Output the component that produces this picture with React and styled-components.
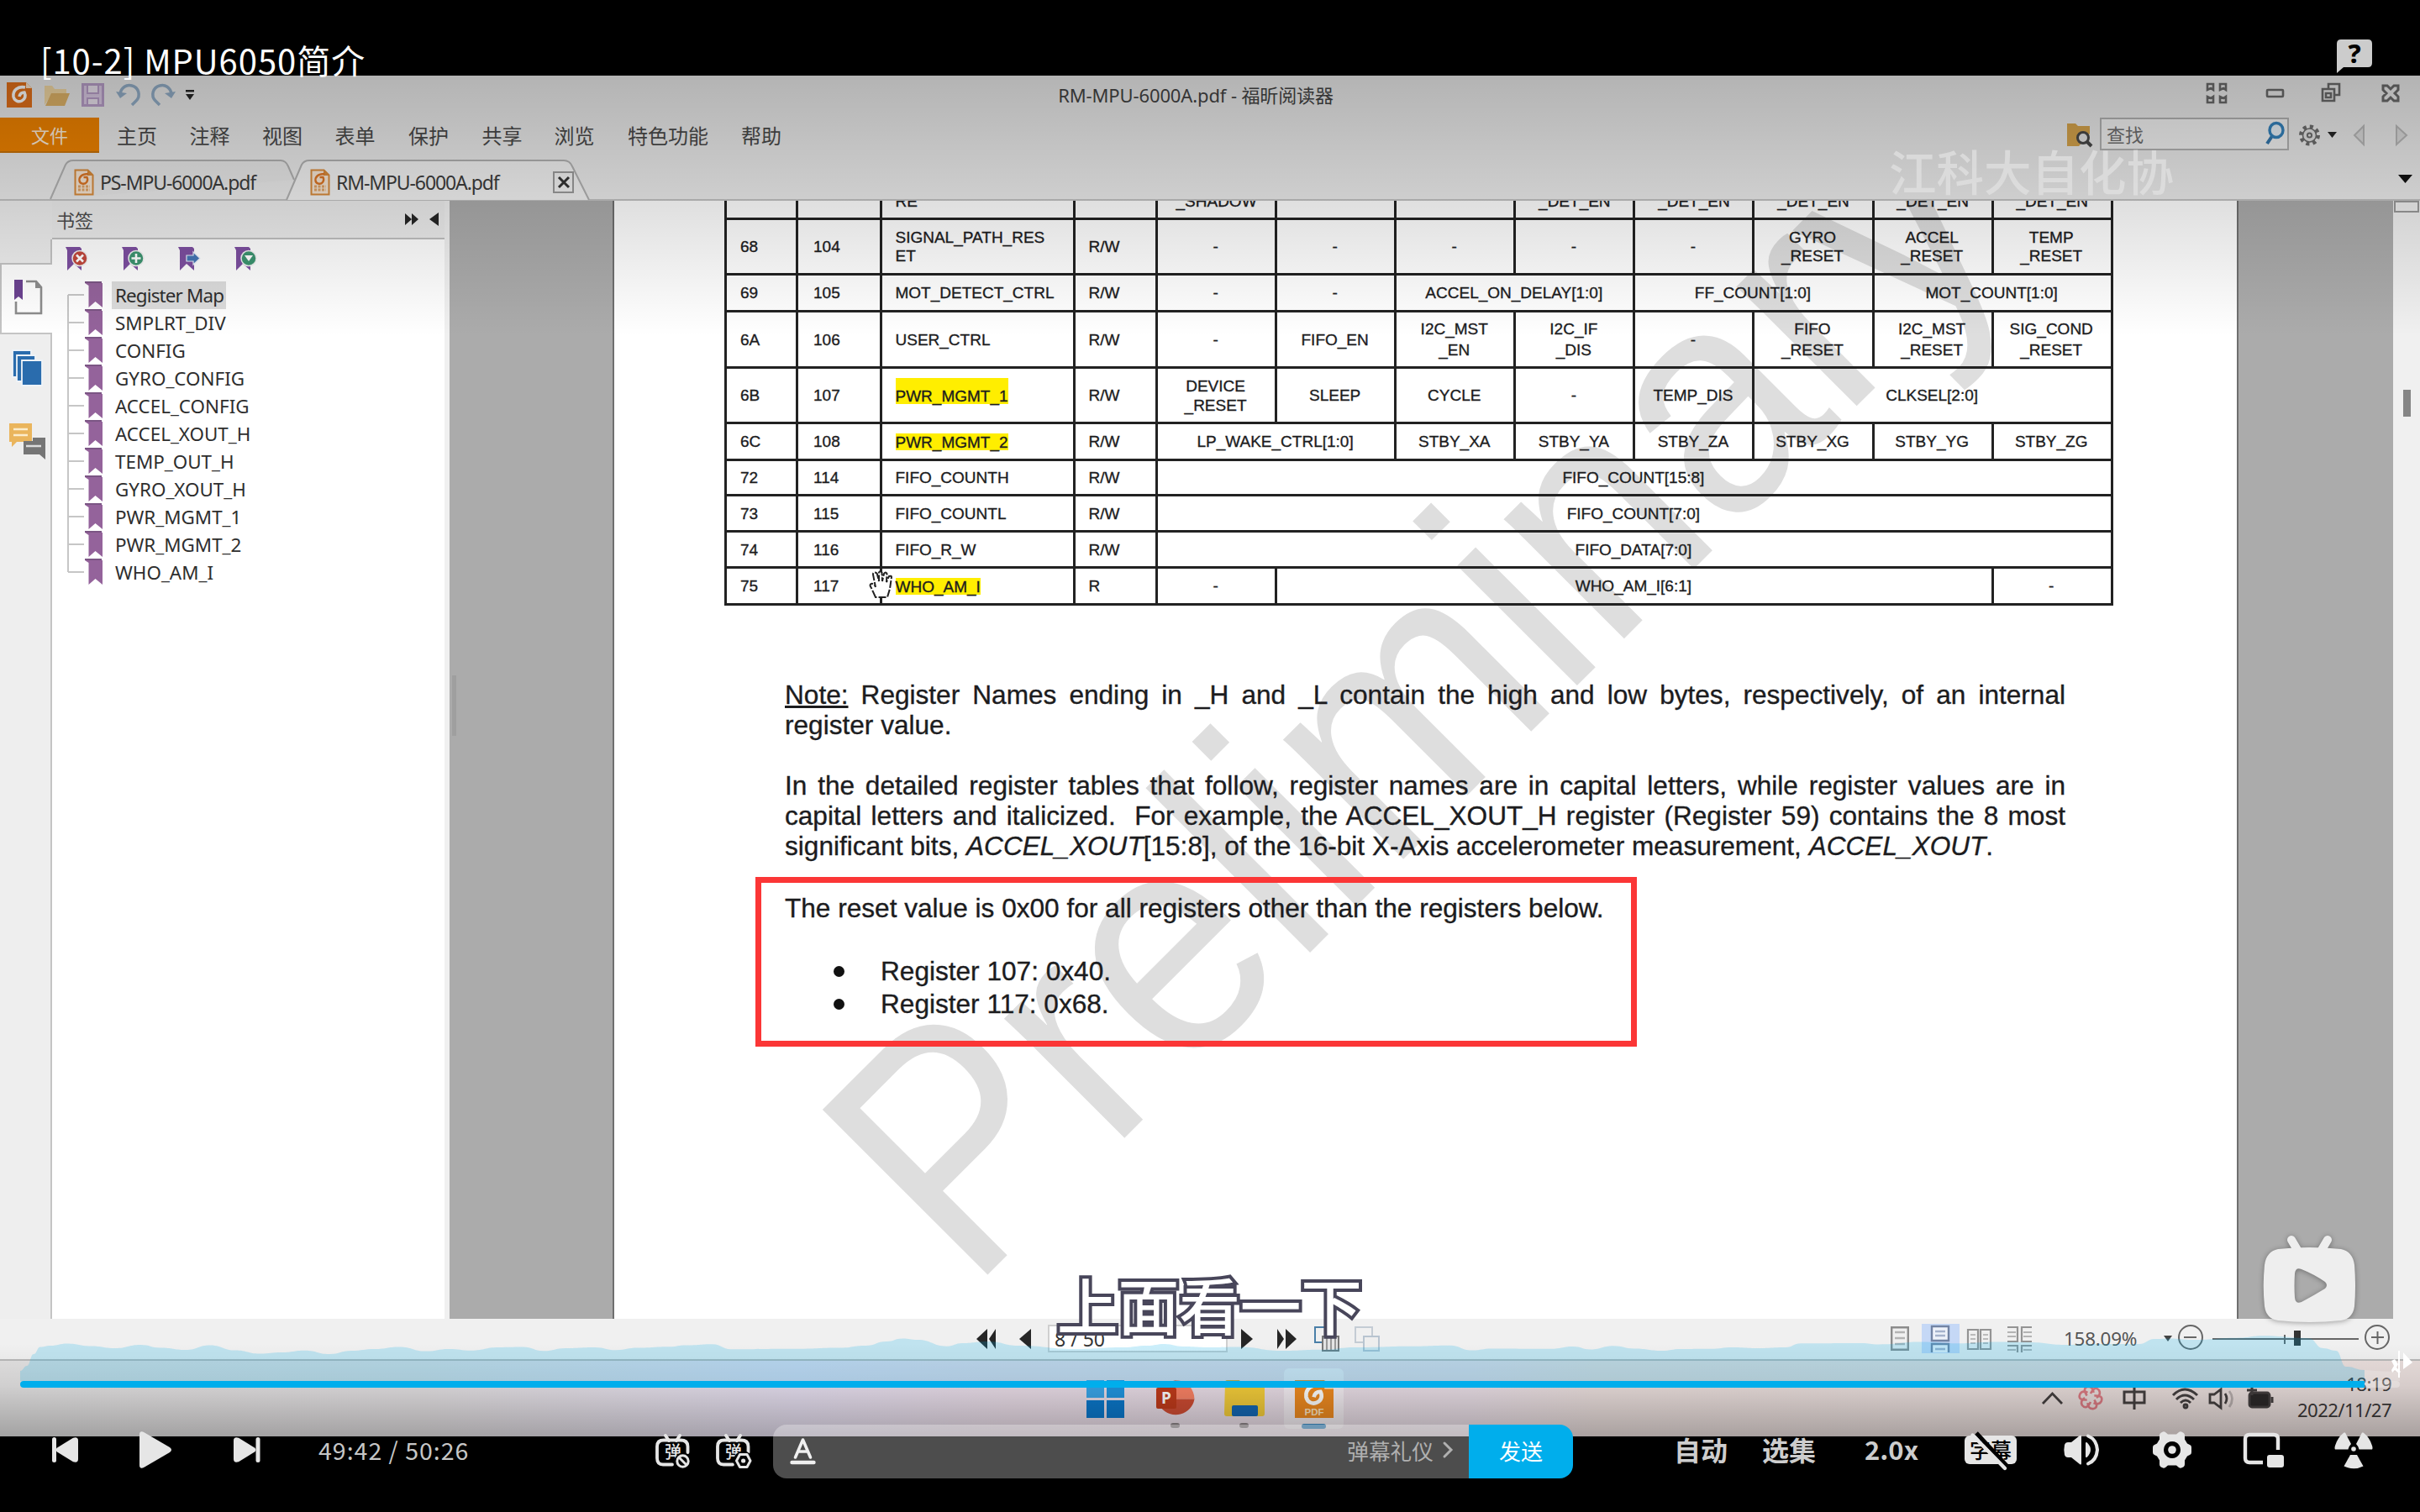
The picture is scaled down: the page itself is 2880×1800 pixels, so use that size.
import React from "react";
import styled, { createGlobalStyle, css } from "styled-components";

const CJK = `"Noto Sans CJK SC", sans-serif`;
const UI = `"Noto Sans", "Noto Sans CJK SC", sans-serif`;
const DOC = `"Liberation Sans", Arial, sans-serif`;

const GlobalStyle = createGlobalStyle`
  * { box-sizing: border-box; }
  body { margin: 0; background: #000; }
  svg { display: block; flex: none; overflow: visible; }
`;

/* ---------- player shell ---------- */
const Player = styled.main`
  position: relative;
  width: 2880px;
  height: 1800px;
  overflow: hidden;
  background: #000;
  padding: 90px 0;
  font-family: ${CJK};
`;

const Video = styled.section`
  width: 2880px;
  height: 1620px;
  display: flex;
  flex-direction: column;
  background: #ececec;
  overflow: hidden;
`;

const TopShade = styled.div`
  position: absolute;
  left: 0;
  top: 90px;
  width: 100%;
  height: 310px;
  background: linear-gradient(rgba(0, 0, 0, 0.24), rgba(0, 0, 0, 0.12) 50%, rgba(0, 0, 0, 0));
  pointer-events: none;
`;

const BottomShade = styled.div`
  position: absolute;
  left: 0;
  top: 1600px;
  width: 100%;
  height: 110px;
  background: linear-gradient(rgba(0, 0, 0, 0), rgba(0, 0, 0, 0.08) 45%, rgba(0, 0, 0, 0.28));
`;

const PlayerHeader = styled.header`
  position: absolute;
  left: 48px;
  right: 57px;
  top: 42px;
  display: flex;
  justify-content: space-between;
  align-items: flex-start;
`;

const VideoTitle = styled.h1`
  margin: 0;
  font: 400 40px/58px ${CJK};
  letter-spacing: 0.95px;
  color: #fff;
`;

const HelpBadge = styled.div`
  margin-top: 3px;
`;

/* ---------- pdf reader chrome ---------- */
const Row = styled.div`
  display: flex;
  align-items: center;
  flex: none;
  height: ${(p) => p.$h}px;
  padding-left: ${(p) => p.$pl || 0}px;
  gap: ${(p) => p.$gap || 0}px;
`;

const Spacer = styled.div`
  flex: ${(p) => (p.$w ? "none" : 1)};
  width: ${(p) => p.$w || 0}px;
`;

const WindowTitle = styled.div`
  width: 340px;
  font: 400 22px/30px ${UI};
  letter-spacing: -0.12px;
  color: #444;
  text-align: center;
  white-space: nowrap;
`;

const FileButton = styled.div`
  width: 118px;
  height: 42px;
  background: #f08300;
  border-bottom: 2px solid #c97208;
  color: #ffeeda;
  font: 400 22px/40px ${CJK};
  text-align: center;
`;

const MenuItem = styled.div`
  font: 400 24px/42px ${CJK};
  color: #4a4a4a;
  white-space: nowrap;
`;

const SearchField = styled.div`
  width: 225px;
  height: 39px;
  margin-bottom: 3px;
  border: 2px solid #b4b4b4;
  background: #f4f4f4;
  display: flex;
  align-items: center;
  justify-content: space-between;
  padding: 0 3px 0 6px;
  font: 400 22px/35px ${CJK};
  color: #707070;
`;

const TabStrip = styled.div`
  flex: none;
  height: 54px;
  padding: 6px 0 0 60px;
  display: flex;
  align-items: flex-end;
  border-bottom: 2px solid #c2c2c2;
`;

const Tab = styled.div`
  position: relative;
  flex: none;
  width: ${(p) => p.$w}px;
  margin-left: ${(p) => p.$ml || 0}px;
  height: 47px;
  display: flex;
  align-items: center;
  gap: 7px;
  padding: 6px 19px 0 28px;
  font: 400 23px/32px ${UI};
  letter-spacing: ${(p) => p.$ls || 0}px;
  color: #3c3c3c;
`;

const TabShape = styled.svg`
  position: absolute;
  left: 0;
  top: 0;
`;

const TabText = styled.span`
  position: relative;
  flex: 1;
  white-space: nowrap;
`;

const CloseBox = styled.span`
  position: relative;
  flex: none;
  width: 25px;
  height: 26px;
  border: 2px solid #9c9c9c;
  display: grid;
  place-items: center;
`;

/* ---------- workspace ---------- */
const Workspace = styled.div`
  flex: none;
  height: 1331px;
  display: flex;
  background: #ababab;
`;

const Rail = styled.nav`
  width: 62px;
  display: flex;
  flex-direction: column;
  background: #eeeeee;
`;

const RailCell = styled.div`
  flex: ${(p) => (p.$h ? "none" : 1)};
  height: ${(p) => (p.$h ? p.$h + "px" : "auto")};
  padding: ${(p) => p.$pad || 0};
  border-right: ${(p) => (p.$open ? "none" : "2px solid #c4c4c4")};
  ${(p) =>
    p.$active &&
    css`
      background: #fff;
      border: 2px solid #c4c4c4;
      border-right: none;
    `}
`;

const Panel = styled.aside`
  width: 473px;
  background: #fff;
  border-right: 6px solid #f0f0f0;
  display: flex;
  flex-direction: column;
`;

const PanelHeader = styled.div`
  height: 46px;
  padding: 0 7px 0 5px;
  display: flex;
  align-items: center;
  background: #ececec;
  border-bottom: 2px solid #c0c0c0;
  font: 400 22px/40px ${CJK};
  color: #4c4c4c;
`;

const PanelTools = styled.div`
  display: flex;
  gap: 41px;
  padding: 8px 0 0 16px;
  height: 50px;
`;

const Tree = styled.ul`
  list-style: none;
  margin: 0;
  padding: 0 0 0 18px;
`;

const TreeRow = styled.li`
  height: 33.05px;
  display: flex;
  align-items: center;
`;

const TreeLabel = styled.span`
  margin-left: 11px;
  padding: 0 3px 0 4px;
  height: 33px;
  background: ${(p) => (p.$selected ? "#dcdcdc" : "transparent")};
  font: 400 22.4px/33px ${UI};
  letter-spacing: ${(p) => p.$ls || 0}px;
  color: #2e2e2e;
  white-space: nowrap;
`;

const Gutter = styled.div`
  width: ${(p) => p.$w}px;
  padding: 565px 0 0 3px;
`;

const Grip = styled.div`
  width: 5px;
  height: 72px;
  background: #9f9f9f;
`;

const Scrollbar = styled.div`
  width: 32px;
  background: #f0f0f0;
  display: flex;
  flex-direction: column;
  align-items: center;
`;

const ScrollUp = styled.div`
  width: 30px;
  height: 14px;
  border: 2px solid #9a9a9a;
  background: #f0f0f0;
`;

const ScrollThumb = styled.div`
  margin-top: 211px;
  width: 9px;
  height: 32px;
  background: #858585;
`;

const Page = styled.article`
  position: relative;
  width: 1935px;
  background: #fff;
  border-left: 2px solid #6f6f6f;
  border-right: 2px solid #6f6f6f;
  overflow: hidden;
  font-family: ${DOC};
  color: #1c1c1e;
`;

const Stamp = styled.div`
  position: absolute;
  left: 424px;
  top: 1000.5px;
  font: 400 352px/352px ${DOC};
  color: #dedede;
  transform-origin: 0 298px;
  transform: rotate(-45deg) scaleY(1.085);
  white-space: nowrap;
`;

const StampCap = styled.span`
  display: inline-block;
  transform-origin: 0 298px;
  transform: scaleY(1.058);
`;

const RegisterTable = styled.div`
  position: relative;
  width: 1653px;
  margin-left: 131px;
  border-right: 3px solid #222;
  font-size: 19px;
  -webkit-text-stroke: 0.35px #1c1c1e;
`;

const RegisterRow = styled.div`
  display: grid;
  grid-template-columns: 85px 99.5px 230px 98.5px repeat(8, 142.1px);
  height: ${(p) => p.$h}px;
  line-height: ${(p) => p.$lh || 22.5}px;
  border-bottom: 3px solid #222;
`;

const Cell = styled.div`
  grid-column: span ${(p) => p.$span || 1};
  display: flex;
  align-items: ${(p) => (p.$cut ? "flex-end" : "center")};
  justify-content: ${(p) => (p.$left ? "flex-start" : "center")};
  text-align: ${(p) => (p.$left ? "left" : "center")};
  padding: ${(p) => (p.$cut ? "0 0 7px" : "2px 2px 0 0")};
  padding-left: ${(p) => p.$left || 0}px;
  min-width: 0;
  min-height: 0;
  border-left: 3px solid #222;
  white-space: pre;
`;

const Mark = styled.span`
  background: #ffee00;
  line-height: 19px;
  padding-top: ${(p) => p.$top || 0}px;
  margin-top: ${(p) => -(p.$top || 0)}px;
`;

const Prose = styled.section`
  position: relative;
  margin: ${(p) => p.$mt}px 0 0 203px;
  width: 1524px;
  font-size: 31.6px;
  line-height: 36.2px;
  -webkit-text-stroke: 0.35px #1c1c1e;
`;

const Line = styled.div`
  white-space: ${(p) => (p.$justify ? "normal" : "pre")};
  text-align-last: ${(p) => (p.$justify ? "justify" : "left")};
  height: 36.2px;
`;

const Callout = styled.section`
  position: relative;
  width: 1049px;
  height: 202px;
  margin: 18.7px 0 0 168px;
  border: 7px solid #fb3636;
  padding: 11.7px 0 0 28px;
  font-size: 31.6px;
  line-height: 36.2px;
  -webkit-text-stroke: 0.35px #1c1c1e;
`;

const Bullets = styled.ul`
  list-style: none;
  margin: 37.5px 0 0;
  padding: 0 0 0 58px;
`;

const Bullet = styled.li`
  display: flex;
  align-items: center;
  height: 39px;
  line-height: 39px;
  &::before {
    content: "";
    width: 13px;
    height: 13px;
    margin-right: 43px;
    border-radius: 50%;
    background: #111;
  }
`;

const HandCursor = styled.svg`
  position: absolute;
  left: 304px;
  top: 440px;
`;

/* ---------- status bar + taskbar ---------- */
const StatusBar = styled.div`
  flex: none;
  height: 50px;
  padding-bottom: 1px;
  display: flex;
  align-items: center;
  background: #f0f0f0;
  border-bottom: 2px solid #b9b9b9;
`;

const PageBox = styled.div`
  width: 214px;
  height: 33px;
  background: #fff;
  border: 2px solid #cfcfcf;
  padding-left: 6px;
  font: 400 23px/31px ${UI};
  color: #333;
`;

const ZoomText = styled.div`
  width: 92px;
  font: 400 22.4px/30px ${UI};
  letter-spacing: -0.2px;
  color: #555;
`;

const ActiveView = styled.div`
  width: 45px;
  height: 35px;
  display: grid;
  place-items: center;
  background: #c5d8f6;
`;

const Taskbar = styled.div`
  flex: none;
  height: 90px;
  display: flex;
  align-items: flex-start;
  background: linear-gradient(90deg, #e2e1e1 0, #e3e0e2 500px, #e6dff0 950px, #eadde8 1200px, #e9dee6 1750px, #ebdfdd 1900px, #e9dedc 100%);
`;

const TaskIcon = styled.div`
  flex: none;
  width: 71px;
  height: 72px;
  margin-left: ${(p) => p.$ml || 0}px;
  margin-top: 9px;
  border-radius: 6px;
  background: ${(p) => (p.$active ? "rgba(255,255,255,.45)" : "transparent")};
  display: flex;
  flex-direction: column;
  align-items: center;
  padding-top: 14px;
`;

const Dot = styled.i`
  flex: none;
  width: ${(p) => p.$w}px;
  height: 6px;
  margin-top: ${(p) => p.$mt || 6}px;
  border-radius: 3px;
  background: ${(p) => p.$c};
`;

const Tray = styled.div`
  display: flex;
  align-items: center;
  height: 86px;
`;

const Clock = styled.div`
  width: 140px;
  text-align: right;
  font: 400 22.2px/31px ${UI};
  letter-spacing: -0.6px;
  color: #3b3838;
`;

/* ---------- things lying over the video ---------- */
const Uploader = styled.div`
  position: absolute;
  left: 2248px;
  top: 172px;
  font: 500 56.5px/60px ${CJK};
  color: rgba(226, 226, 226, 0.72);
  white-space: nowrap;
`;

const Subtitle = styled.div`
  position: absolute;
  left: 1258px;
  top: 1504px;
  font: 500 72.6px/96px ${CJK};
  color: #fff;
  -webkit-text-stroke: 8px #48465a;
  paint-order: stroke fill;
  white-space: nowrap;
`;

const LogoBadge = styled.div`
  position: absolute;
  left: 2693px;
  top: 1470px;
  filter: drop-shadow(0 1px 3px rgba(0, 0, 0, 0.35));
`;

const Heatmap = styled.svg`
  position: absolute;
  left: 0;
  top: 1580px;
`;

const ProgressTrack = styled.div`
  position: absolute;
  left: 24px;
  top: 1644px;
  width: 2832px;
  height: 8px;
  border-radius: 4px;
  overflow: hidden;
  background: rgba(255, 255, 255, 0.3);
`;

const ProgressFill = styled.div`
  width: 2790px;
  height: 8px;
  background: #00aeec;
`;

const ThumbIcon = styled.svg`
  position: absolute;
  left: 2846px;
  top: 1607px;
`;

const Controls = styled.footer`
  position: absolute;
  left: 0;
  top: 1696px;
  width: 2880px;
  height: 64px;
  display: flex;
  align-items: center;
  color: #e6e6e6;
`;

const Slot = styled.div`
  flex: none;
  width: ${(p) => p.$w}px;
  margin-left: ${(p) => p.$ml || 0}px;
  margin-top: ${(p) => p.$dy || 0}px;
`;

const Time = styled.div`
  flex: none;
  width: 200px;
  margin-left: 69px;
  margin-top: -4px;
  font: 400 28.5px/40px ${CJK};
  letter-spacing: 1px;
  color: #c6c6c6;
  white-space: nowrap;
`;

const DanmakuBar = styled.div`
  flex: none;
  margin-left: 26px;
  width: 828px;
  height: 64px;
  border-radius: 16px 0 0 16px;
  background: rgba(255, 255, 255, 0.3);
  display: flex;
  align-items: center;
  padding-left: 20px;
`;

const Etiquette = styled.span`
  margin-left: auto;
  margin-right: 11px;
  margin-top: -2px;
  font: 400 25.7px/40px ${CJK};
  color: #b0b0b0;
`;

const SendButton = styled.div`
  flex: none;
  width: 124px;
  height: 64px;
  border-radius: 0 16px 16px 0;
  background: #00aeec;
  color: #fff;
  font: 400 26px/62px ${CJK};
  text-align: center;
`;

const TextControl = styled.div`
  flex: none;
  width: ${(p) => p.$w}px;
  margin-left: ${(p) => p.$ml}px;
  margin-top: -6px;
  font: 700 ${(p) => p.$fs || 32}px/44px ${CJK};
  color: #cdcdcd;
  white-space: nowrap;
`;

/* ---------- icons ---------- */
const FoxitIcon = ({ w = 30, h = 30, bg = "#e2701a", pdf }) => (
  <svg width={w} height={h} viewBox="0 0 30 30" preserveAspectRatio="none">
    <path d="M0 0h23l7 7v23H0z" fill={bg} />
    <path d="M23 0l7 7h-7z" fill="#fbe3c8" />
    <path d="M22 6C13 4 7 10 8 17c1 5 6 7 10 5 4-2 5-6 3-10q-5 0-6 5" fill="none" stroke="#fff" strokeWidth="3.6" transform={pdf ? "translate(2 -1) scale(.85)" : ""} />
    {pdf && <text x="15" y="28" fontSize="7.5" fontWeight="700" textAnchor="middle" fill="#fde6c4" fontFamily="Liberation Sans">PDF</text>}
  </svg>
);

const DocGlyph = styled.svg`
  position: relative;
`;

const DocIcon = () => (
  <DocGlyph width="24" height="32" viewBox="0 0 24 32">
    <path d="M1.5 1.5h15l6 6v23h-21z" fill="#f7e6d4" stroke="#d88a3a" strokeWidth="2" />
    <path d="M16 1.5v6.500h6.500z" fill="#d88a3a" />
    <path d="M17 6C9 6 6 10 6.500 14c.5 4 6 5 8.500 2 1.500-2 1.500-4 .5-6h-4" fill="none" stroke="#dc7524" strokeWidth="2.4" />
    <path d="M5 21h14M5 25h14" stroke="#e0a468" strokeWidth="3" strokeDasharray="3 1.500" />
  </DocGlyph>
);

const Ribbon = ({ kind }) => (
  <svg width="26" height="30" viewBox="0 0 26 30">
    <path d="M0 1h17l2 2v26l-9-8-8 8V5z" fill="#7d4fa0" />
    {kind === "next" ? (
      <path d="M10 11h8V7l8 7.500-8 7.500v-4h-8z" fill="#4575b4" stroke="#e8eef8" strokeWidth="1.200" />
    ) : (
      <circle cx="17" cy="14.500" r="9" fill={kind === "delete" ? "#c2483c" : "#3c9470"} stroke="#f1f1f1" strokeWidth="1.500" />
    )}
    {kind === "delete" && <path d="M13 10.500l8 8m0-8l-8 8" stroke="#fff" strokeWidth="2.600" />}
    {kind === "add" && <path d="M17 9v11m-5.500-5.500h11" stroke="#fff" strokeWidth="2.600" />}
    {kind === "expand" && <path d="M12 11h10l-5 7z" fill="#fff" />}
  </svg>
);

const TreeNode = ({ first, last }) => (
  <svg width="42" height="33" viewBox="0 0 42 33">
    <path d={`M1 ${first ? 16 : 0}V${last ? 16 : 33}M1 16h19`} stroke="#c6c6c6" strokeWidth="2" fill="none" />
    <path d="M21 2h21v29l-8.500-7-8 7V5z" fill="#94639b" />
    <path d="M21 1h20" stroke="#7b5584" strokeWidth="2" />
  </svg>
);

const Arrow = ({ d, w, h = 24, c = "#262626" }) => (
  <svg width={w} height={h} viewBox={`0 0 ${w} ${h}`}>
    <path d={d} fill={c} />
  </svg>
);

const DanmakuIcon = ({ children }) => (
  <svg width="42" height="42" viewBox="0 0 42 42">
    <path d="M12 2l4 6M29 2l-4 6" stroke="#e6e6e6" strokeWidth="4" strokeLinecap="round" />
    <path d="M20 36.500H9Q2 36.500 2 29V15Q2 7.500 10 7.500H30Q38.500 7.500 38.500 15V22" fill="none" stroke="#e6e6e6" strokeWidth="3.800" strokeLinecap="round" />
    <text x="11" y="29" fontFamily="Noto Sans CJK SC" fontWeight="500" fontSize="20" fill="#e6e6e6">弹</text>
    {children}
  </svg>
);

/* ---------- data ---------- */
const MENU = [
  ["主页", 21], ["注释", 38.5], ["视图", 38.5], ["表单", 38.5], ["保护", 39.5],
  ["共享", 39.5], ["浏览", 38], ["特色功能", 39.5], ["帮助", 39],
];

const BOOKMARKS = [
  "Register Map", "SMPLRT_DIV", "CONFIG", "GYRO_CONFIG", "ACCEL_CONFIG", "ACCEL_XOUT_H",
  "TEMP_OUT_H", "GYRO_XOUT_H", "PWR_MGMT_1", "PWR_MGMT_2", "WHO_AM_I",
];

const REGISTERS = [
  { h: 66, head: ["68", "104", "SIGNAL_PATH_RES\nET", "R/W"], bits: ["-", "-", "-", "-", "-", "GYRO\n_RESET", "ACCEL\n_RESET", "TEMP\n_RESET"] },
  { h: 44, head: ["69", "105", "MOT_DETECT_CTRL", "R/W"], bits: ["-", "-", ["ACCEL_ON_DELAY[1:0]", 2], ["FF_COUNT[1:0]", 2], ["MOT_COUNT[1:0]", 2]] },
  { h: 67.5, lh: 24.3, head: ["6A", "106", "USER_CTRL", "R/W"], bits: ["-", "FIFO_EN", "I2C_MST\n_EN", "I2C_IF\n_DIS", "-", "FIFO\n_RESET", "I2C_MST\n_RESET", "SIG_COND\n_RESET"] },
  { h: 66, mark: 12, head: ["6B", "107", "PWR_MGMT_1", "R/W"], bits: ["DEVICE\n_RESET", "SLEEP", "CYCLE", "-", "TEMP_DIS", ["CLKSEL[2:0]", 3]] },
  { h: 43.5, mark: 1, head: ["6C", "108", "PWR_MGMT_2", "R/W"], bits: [["LP_WAKE_CTRL[1:0]", 2], "STBY_XA", "STBY_YA", "STBY_ZA", "STBY_XG", "STBY_YG", "STBY_ZG"] },
  { h: 42, head: ["72", "114", "FIFO_COUNTH", "R/W"], bits: [["FIFO_COUNT[15:8]", 8]] },
  { h: 43.5, head: ["73", "115", "FIFO_COUNTL", "R/W"], bits: [["FIFO_COUNT[7:0]", 8]] },
  { h: 43, head: ["74", "116", "FIFO_R_W", "R/W"], bits: [["FIFO_DATA[7:0]", 8]] },
  { h: 43.5, mark: 1, head: ["75", "117", "WHO_AM_I", "R"], bits: ["-", ["WHO_AM_I[6:1]", 6], "-"] },
];

const HEAT = [
  [24, 1632], [32, 1626], [40, 1612], [48, 1603.5], [60, 1602], [80, 1599.5], [108, 1602.5], [137, 1605], [167, 1601], [191, 1604.5],
  [221, 1607], [250, 1601.5], [280, 1607.5], [309, 1611.5], [335, 1610], [363, 1607.7], [392, 1612], [418, 1608],
  [446, 1606], [475, 1603.5], [507, 1608.6], [534, 1606], [561, 1607.7], [593, 1604], [622, 1603.6], [647, 1608.3],
  [673, 1605], [708, 1604], [733, 1607.3], [759, 1604.6], [797, 1603.3], [816, 1601.6], [848, 1600.3], [870, 1606.3],
  [944, 1605.8], [1000, 1604.5], [1030, 1602], [1055, 1597], [1074, 1593.5], [1092, 1595], [1127, 1602.7], [1145, 1599], [1176, 1597],
  [1212, 1602], [1279, 1606], [1337, 1604], [1365, 1602], [1386, 1600], [1408, 1603], [1439, 1604], [1475, 1603.5],
  [1524, 1608], [1573, 1606.7], [1613, 1604], [1680, 1602.7], [1725, 1601.7], [1752, 1607.5], [1775, 1605.5],
  [1845, 1605.8], [1872, 1603], [1893, 1606.5], [1920, 1602.3], [1945, 1605.5], [1978, 1608], [2000, 1606], [2035, 1605.8],
  [2062, 1604], [2092, 1605], [2125, 1604], [2143, 1599.3], [2215, 1599], [2236, 1600.5], [2286, 1597.6], [2330, 1599.3],
  [2376, 1597.6], [2416, 1598], [2457, 1601], [2492, 1600], [2546, 1600], [2564, 1594], [2582, 1593.4], [2609, 1595],
  [2662, 1592.7], [2693, 1590.3], [2747, 1593], [2765, 1605], [2780, 1608], [2792, 1627], [2814, 1631],
];

const heatPath = () => {
  let d = `M24 64L${HEAT[0][0]} ${HEAT[0][1] - 1580}`;
  for (let i = 1; i < HEAT.length; i++) {
    const [x0, y0] = HEAT[i - 1];
    const [x1, y1] = HEAT[i];
    const m = (x0 + x1) / 2;
    d += `C${m} ${y0 - 1580} ${m} ${y1 - 1580} ${x1} ${y1 - 1580}`;
  }
  return d + "V64Z";
};

/* ---------- sections ---------- */
const TitleRow = () => (
  <Row $h={46}>
    <Spacer $w={8} />
    <FoxitIcon />
    <Spacer $w={15} />
    <svg width="30" height="28" viewBox="0 0 30 28">
      <path d="M0 3h9l3 4h14v6H9L0 26z" fill="#f3d9a4" />
      <path d="M8 12h22l-6 15H1z" fill="#e0b468" />
    </svg>
    <Spacer $w={14} />
    <svg width="27" height="28" viewBox="0 0 27 28">
      <path d="M1.500 1.500h24v25h-24z" fill="#dccbe6" stroke="#b99fca" strokeWidth="3" />
      <path d="M7 2h13v10H7zM7 18h13v8H7z" fill="#ece4f0" stroke="#b99fca" strokeWidth="2" />
    </svg>
    <Spacer $w={14} />
    <svg width="30" height="28" viewBox="0 0 30 28">
      <path d="M5 13C6 5 13 1 19 3c8 2 11 12 5 18l-5 5" fill="none" stroke="#93aec8" strokeWidth="3.500" />
      <path d="M0 10l5 8 8-6z" fill="#93aec8" />
    </svg>
    <Spacer $w={11} />
    <svg width="30" height="28" viewBox="0 0 30 28">
      <path d="M25 13C24 5 17 1 11 3 3 5 0 15 6 21l5 5" fill="none" stroke="#93aec8" strokeWidth="3.500" />
      <path d="M30 10l-5 8-8-6z" fill="#93aec8" />
    </svg>
    <Spacer $w={12} />
    <Arrow w={10} h={12} d="M0 0h10v2.500H0zM0 5h10l-5 7z" />
    <Spacer $w={1022} />
    <WindowTitle>RM-MPU-6000A.pdf - 福昕阅读器</WindowTitle>
    <Spacer />
    <svg width="254" height="30" viewBox="0 1 254 30" fill="none" stroke="#6b6b6b" strokeWidth="2.600">
      <path d="M2 10V3h7v7l-3-2zM17 10V3h7v7l-3-2zM2 18v7h7v-7l-3 2zM17 18v7h7v-7l-3 2z" />
      <rect x="73" y="10" width="19" height="8" rx="1" />
      <path d="M146 8V3h13v13h-5M139 9h14v14h-14zM143 14h6v5h-6z" />
      <path d="M211 5h5l4 4 4-4h5v5l-4 4 4 4v5h-5l-4-4-4 4h-5v-5l4-4-4-4z" strokeWidth="3" />
    </svg>
    <Spacer $w={1} />
  </Row>
);

const MenuRow = () => (
  <Row $h={49}>
    <FileButton>文件</FileButton>
    {MENU.map(([label, gap]) => (
      <React.Fragment key={label}>
        <Spacer $w={gap} />
        <MenuItem>{label}</MenuItem>
      </React.Fragment>
    ))}
    <Spacer />
    <svg width="30" height="30" viewBox="0 0 30 30">
      <path d="M0 1h10l3 3h14v9L14 28H0z" fill="#d6a44c" />
      <circle cx="19" cy="18" r="6.500" fill="#e4e4e4" stroke="#484848" strokeWidth="3" />
      <path d="M24 23l5 5" stroke="#484848" strokeWidth="4" />
    </svg>
    <Spacer $w={9} />
    <SearchField>
      查找
      <svg width="23" height="28" viewBox="0 0 23 28">
        <path d="M8 17l-6 9" stroke="#3477ad" strokeWidth="4" />
        <ellipse cx="13" cy="10" rx="8" ry="8.500" fill="#e8f1f8" stroke="#3583bd" strokeWidth="3.400" />
      </svg>
    </SearchField>
    <Spacer $w={12} />
    <svg width="25" height="28" viewBox="0 0 25 28" fill="none" stroke="#6e6e6e">
      <circle cx="12.500" cy="14" r="10" strokeWidth="5" strokeDasharray="3.927 3.927" />
      <circle cx="12.500" cy="14" r="8" fill="#e4e4e4" strokeWidth="1.600" />
      <circle cx="12.500" cy="14" r="2.600" strokeWidth="2" />
    </svg>
    <Spacer $w={9} />
    <Arrow w={11} h={7} d="M0 0h11L5.500 7z" />
    <Spacer $w={20} />
    <svg width="64" height="26" viewBox="0 0 64 26" fill="#dcdcdc" stroke="#b9b9b9" strokeWidth="2">
      <path d="M12 2v22L1 13zM51 2v22l12-11z" />
    </svg>
    <Spacer $w={15} />
  </Row>
);

const Tabs = () => (
  <TabStrip>
    <Tab $w={292} $ls={-1.1}>
      <TabShape width="292" height="48" viewBox="0 0 292 48">
        <path d="M0 47L18 6Q21 1 27 1H274Q280 1 283 8L290 24" fill="#e9e9e9" stroke="#b2b2b2" strokeWidth="2" />
      </TabShape>
      <DocIcon />
      <TabText>PS-MPU-6000A.pdf</TabText>
    </Tab>
    <Tab $w={361} $ml={-11} $ls={-1.1}>
      <TabShape width="361" height="48" viewBox="0 0 361 48">
        <path d="M0 48L18 6Q21 1 27 1H330Q337 1 340 8L360 48" fill="#f3f3f3" stroke="#b2b2b2" strokeWidth="2" />
      </TabShape>
      <DocIcon />
      <TabText>RM-MPU-6000A.pdf</TabText>
      <CloseBox>
        <svg width="14" height="14" viewBox="0 0 14 14">
          <path d="M1 1l12 12M13 1L1 13" stroke="#333" strokeWidth="3" />
        </svg>
      </CloseBox>
    </Tab>
    <Spacer />
    <Slot $w={26}>
      <svg width="17" height="31" viewBox="0 0 17 31">
        <path d="M0 2h17L8.500 12z" fill="#111" />
      </svg>
    </Slot>
  </TabStrip>
);

const SideBar = () => (
  <>
    <Rail>
      <RailCell $h={46} $open />
      <RailCell $h={28} />
      <RailCell $h={85} $active $pad="18px 0 0 15px">
        <svg width="34" height="42" viewBox="0 0 34 42">
          <path d="M14 2h12l6 7v31H2V26" fill="#fff" stroke="#8d8d8d" strokeWidth="2.600" />
          <path d="M25 1v9h8z" fill="#8d8d8d" />
          <path d="M0 0h10v24l-5-4-5 4z" fill="#6c4391" />
        </svg>
      </RailCell>
      <RailCell $pad="19px 0 0 11px">
        <svg width="44" height="130" viewBox="0 0 44 130">
          <g fill="#2a6cad" stroke="#eef3f8" strokeWidth="1.800">
            <path d="M4 0h22v32H4z" />
            <path d="M9 6h22v31H9z" />
            <path d="M15 12h24v30H15z" />
          </g>
          <path d="M0 87h27v22H9l-6 6v-6H0z" fill="#eab55c" />
          <path d="M5 94h17M5 101h17" stroke="#fbeccb" strokeWidth="2.500" />
          <path d="M28 104h15v26l-7-6H17v-16h11z" fill="#757575" />
          <path d="M20 114h18" stroke="#ddd" strokeWidth="2.500" />
        </svg>
      </RailCell>
    </Rail>
    <Panel>
      <PanelHeader>
        书签
        <Spacer />
        <Arrow w={16} h={14} d="M0 0l8 7-8 7zM8 0l8 7-8 7z" />
        <Spacer $w={13} />
        <Arrow w={11} h={16} d="M11 0v16L0 8z" />
      </PanelHeader>
      <PanelTools>
        <Ribbon kind="delete" />
        <Ribbon kind="add" />
        <Ribbon kind="next" />
        <Ribbon kind="expand" />
      </PanelTools>
      <Tree>
        {BOOKMARKS.map((name, i) => (
          <TreeRow key={name}>
            <TreeNode first={i === 0} last={i === BOOKMARKS.length - 1} />
            <TreeLabel $selected={i === 0} $ls={i === 0 ? -0.85 : 0}>{name}</TreeLabel>
          </TreeRow>
        ))}
      </Tree>
    </Panel>
  </>
);

const HEAD_PAD = [16, 18, 16, 16];

const Registers = () => (
  <RegisterTable>
    <RegisterRow $h={22.5}>
      <Cell $cut /><Cell $cut /><Cell $cut $left={16}>RE</Cell><Cell $cut />
      <Cell $cut>_SHADOW</Cell><Cell $cut /><Cell $cut />
      {[0, 1, 2, 3, 4].map((i) => <Cell $cut key={i}>_DET_EN</Cell>)}
    </RegisterRow>
    {REGISTERS.map((r) => (
      <RegisterRow key={r.head[0]} $h={r.h} $lh={r.lh}>
        {r.head.map((t, i) => (
          <Cell $left={HEAD_PAD[i]} key={i}>{i === 2 && r.mark ? <Mark $top={r.mark}>{t}</Mark> : t}</Cell>
        ))}
        {r.bits.map((b, i) =>
          Array.isArray(b) ? <Cell key={i} $span={b[1]}>{b[0]}</Cell> : <Cell key={i}>{b}</Cell>
        )}
      </RegisterRow>
    ))}
  </RegisterTable>
);

const DocumentPage = () => (
  <Page>
    <Stamp><StampCap>P</StampCap>reliminary</Stamp>
    <Registers />
    <Prose $mt={88.5}>
      <Line $justify><u>Note:</u> Register Names ending in _H and _L contain the high and low bytes, respectively, of an internal</Line>
      <Line>register value.</Line>
    </Prose>
    <Prose $mt={35.5}>
      <Line $justify>In the detailed register tables that follow, register names are in capital letters, while register values are in</Line>
      <Line $justify>capital letters and italicized.&nbsp; For example, the ACCEL_XOUT_H register (Register 59) contains the 8 most</Line>
      <Line>significant bits, <i>ACCEL_XOUT</i>[15:8], of the 16-bit X-Axis accelerometer measurement, <i>ACCEL_XOUT</i>.</Line>
    </Prose>
    <Callout>
      <Line>The reset value is 0x00 for all registers other than the registers below.</Line>
      <Bullets>
        <Bullet>Register 107: 0x40.</Bullet>
        <Bullet>Register 117: 0x68.</Bullet>
      </Bullets>
    </Callout>
    <HandCursor width="30" height="34" viewBox="0 0 30 34">
      <path d="M7 32L2 21q-3-4 0-5t5 4L4 5q0-3 2.500-2.500T9 5l2 8V2.500q1-2.500 3.500 0L15 13l2-9q2-3 3.500 0L20 14l3-7q3-1 3 1l-2 14-3 10z" fill="#fff" stroke="#222" strokeWidth="2" strokeDasharray="9 2" />
    </HandCursor>
  </Page>
);

const Status = () => (
  <StatusBar>
    <Spacer $w={1162} />
    <Arrow w={25} d="M13 0v24L0 12zM23 0v24l-8-12z" />
    <Spacer $w={26} />
    <Arrow w={14} d="M14 0v24L0 12z" />
    <Spacer $w={20} />
    <PageBox>8 / 50</PageBox>
    <Spacer $w={16} />
    <Arrow w={14} d="M0 0v24l14-12z" />
    <Spacer $w={29} />
    <Arrow w={23} d="M0 0l8 12L0 24zM10 0l13 12-13 12z" />
    <Spacer $w={21} />
    <svg width="78" height="30" viewBox="0 0 78 30" fill="none" strokeWidth="2">
      <path d="M1 1h19v18H1z" stroke="#4a7fa8" />
      <path d="M10 12h19v17H10z" fill="#e4e4e4" stroke="#777" />
      <path d="M15 13v15M20 13v15M25 13v15" stroke="#999" />
      <path d="M49 1h20v18H49z" stroke="#c4ccd4" />
      <path d="M59 12h18v17H59z" fill="#eee" stroke="#b8c4d0" />
    </svg>
    <Spacer $w={608} />
    <svg width="22" height="29" viewBox="0 0 22 29" fill="none" stroke="#8c8c8c" strokeWidth="2.400">
      <path d="M1.200 1.200h19.600v26.600H1.200z" />
      <path d="M5 7h12M5 14h12M5 21h12" stroke="#b4b4b4" />
    </svg>
    <Spacer $w={15} />
    <ActiveView>
      <svg width="23" height="33" viewBox="0 0 23 33" fill="none" stroke="#7284a4" strokeWidth="2.400">
        <path d="M1 2h20v17H1zM1 33V23h20v10" fill="#eef2fa" />
        <path d="M5 8h12M5 13h12M5 29h12" stroke="#a5b2cc" />
      </svg>
    </ActiveView>
    <Spacer $w={9} />
    <svg width="29" height="26" viewBox="0 0 29 26" fill="none" stroke="#949494" strokeWidth="2.200">
      <path d="M1 2h12v23H1zM16 2h12v23H16z" />
      <path d="M4 8h6M4 13h6M4 18h6M19 8h6M19 13h6M19 18h6" stroke="#bbb" />
    </svg>
    <Spacer $w={19} />
    <svg width="29" height="30" viewBox="0 0 29 30" fill="none" stroke="#949494" strokeWidth="2.200">
      <path d="M0 1h12v17H0M29 1H17v17h12M0 23h12v8M29 23H17v8" />
      <path d="M0 7h10M0 12h10M19 7h10M19 12h10M0 28h10M19 28h10" stroke="#b4b4b4" />
    </svg>
    <Spacer $w={38} />
    <ZoomText>158.09%</ZoomText>
    <Spacer $w={27} />
    <Arrow w={10} h={7} d="M0 0h10L5 7z" c="#444" />
    <Spacer $w={6} />
    <svg width="256" height="32" viewBox="0 0 256 32" fill="none" stroke="#666" strokeWidth="2">
      <circle cx="16" cy="14" r="14" />
      <path d="M8 14h15M42 16h174M128 11v11" />
      <circle cx="238" cy="14" r="14" />
      <path d="M231 14h15M238.500 7v15" />
      <path d="M143 6v18" stroke="#333" strokeWidth="8" />
    </svg>
  </StatusBar>
);

const Desktop = () => (
  <Taskbar>
    <TaskIcon $ml={1280}>
      <svg width="45" height="45" viewBox="0 0 45 45" fill="#1287d6">
        <path d="M0 0h21v21H0z" fill="#3aa5e8" /><path d="M24 0h21v21H24z" fill="#2096e0" />
        <path d="M0 24h21v21H0zM24 24h21v21H24z" fill="#0b78cb" />
      </svg>
    </TaskIcon>
    <TaskIcon $ml={12}>
      <svg width="46" height="45" viewBox="0 0 46 45">
        <path d="M23 0a22.500 22.500 0 0 1 22.500 22.500H23z" fill="#fa8265" />
        <path d="M45.500 22.500a22.500 22.500 0 0 1-40 10L23 22.500z" fill="#cf4c33" />
        <path d="M23 0v23L8 34A22.500 22.500 0 0 1 23 0z" fill="#e8694d" />
        <rect x="0" y="9" width="24" height="25" rx="2" fill="#c13b1b" />
        <text x="12" y="28" fontSize="19" fontWeight="700" fill="#fff" textAnchor="middle" fontFamily="Noto Sans">P</text>
      </svg>
      <Dot $w={11} $c="#8d8588" />
    </TaskIcon>
    <TaskIcon $ml={11}>
      <svg width="48" height="45" viewBox="0 0 48 45">
        <path d="M1 3q0-3 3-3h14l4 6h22q4 0 4 4v30q0 3-3 3H3q-3 0-3-3z" fill="#f4cd3a" />
        <path d="M1 3q0-3 3-3h14l3 9H1z" fill="#e0a524" />
        <rect x="9" y="30" width="31" height="13" rx="2" fill="#1467b3" />
      </svg>
      <Dot $w={11} $c="#8d8588" />
    </TaskIcon>
    <TaskIcon $ml={12} $active>
      <FoxitIcon w={46} h={45} bg="#ee8a20" pdf />
      <Dot $w={29} $c="#3d8cc4" $mt={7} />
    </TaskIcon>
    <Spacer />
    <Tray>
      <svg width="276" height="40" viewBox="0 0 276 40" fill="none" stroke="#443f3f" strokeWidth="2.800">
        <path d="M1 28l11.500-12L24 28" />
        <g stroke="#dc7b83" strokeWidth="2.600" transform="translate(58 21)">
          {[0, 60, 120, 180, 240, 300].map((a) => (
            <path key={a} d="M0-5Q5-15 10-9Q13-4 7 0" transform={`rotate(${a})`} />
          ))}
        </g>
        <path d="M98 14h24v13H98zM110 6v29" strokeWidth="3" />
        <path d="M156 18q14-14 29 0M160 23q10-10 21 0M165 27q6-6 12 0" strokeWidth="3" />
        <circle cx="171" cy="31" r="2" />
        <path d="M200 17h5l8-6v22l-8-6h-5z" />
        <path d="M218 16q4 6 0 12" /><path d="M223 13q7 9 0 19" stroke="#b6adac" />
        <rect x="247" y="15" width="24" height="17" rx="3" fill="#2b2828" />
        <path d="M274 20v7M250 6v12M244 12h12" strokeWidth="3" />
      </svg>
      <Clock>18:19<br />2022/11/27</Clock>
      <Spacer $w={34} />
    </Tray>
  </Taskbar>
);

const PlayerControls = () => (
  <Controls>
    <Slot $w={31} $ml={62} $dy={-4}>
      <svg width="31" height="30" viewBox="0 0 31 30" fill="#e6e6e6">
        <rect width="5" height="30" rx="2.500" />
        <path d="M6 12.500L25 .8Q31-1 31 4v22q0 5-6 3.200L6 17.500q-3-2.500 0-5z" />
      </svg>
    </Slot>
    <Slot $w={38} $ml={73} $dy={-4}>
      <svg width="38" height="44" viewBox="0 0 38 44">
        <path d="M0 4Q0-2 6 1.500L36 19q4 3 0 6L6 42.500Q0 46 0 40z" fill="#e6e6e6" />
      </svg>
    </Slot>
    <Slot $w={32} $ml={74} $dy={-4}>
      <svg width="32" height="30" viewBox="0 0 32 30" fill="#e6e6e6">
        <rect x="26.500" width="5" height="30" rx="2.500" />
        <path d="M25 12.500L6 .8Q0-1 0 4v22q0 5 6 3.200L25 17.500q3-2.500 0-5z" />
      </svg>
    </Slot>
    <Time>49:42 / 50:26</Time>
    <Slot $w={42} $ml={201} $dy={-1}>
      <DanmakuIcon>
        <circle cx="32.500" cy="32.500" r="10" fill="#000" />
        <circle cx="32.500" cy="32.500" r="6.700" fill="none" stroke="#e6e6e6" strokeWidth="3" />
        <path d="M28 28l9 9" stroke="#e6e6e6" strokeWidth="3" />
      </DanmakuIcon>
    </Slot>
    <Slot $w={42} $ml={30} $dy={-1}>
      <DanmakuIcon>
        <circle cx="32.500" cy="32" r="11.500" fill="#000" />
        <path d="M28.500 24.500h8.500l4 7.500-4 7.500h-8.500l-4-7.500z" fill="none" stroke="#e6e6e6" strokeWidth="3" strokeLinejoin="round" />
        <circle cx="32.600" cy="32" r="2.600" fill="#e6e6e6" />
      </DanmakuIcon>
    </Slot>
    <DanmakuBar>
      <svg width="31" height="32" viewBox="0 0 31 32" fill="none" stroke="#f0f0f0" strokeWidth="3.600" strokeLinecap="round" strokeLinejoin="round">
        <path d="M6.500 23L15.500 2l9 21M10 16h11" />
        <path d="M2.500 29h26" strokeWidth="4.400" />
      </svg>
      <Etiquette>弹幕礼仪</Etiquette>
      <svg width="12" height="20" viewBox="0 0 12 20">
        <path d="M2 0l8 8-8 8" fill="none" stroke="#b0b0b0" strokeWidth="3" strokeLinecap="round" />
      </svg>
      <Spacer $w={19} />
    </DanmakuBar>
    <SendButton>发送</SendButton>
    <TextControl $w={64} $ml={120}>自动</TextControl>
    <TextControl $w={64} $ml={41}>选集</TextControl>
    <TextControl $w={62} $ml={58} $fs={31}>2.0x</TextControl>
    <Slot $w={62} $ml={57}>
      <svg width="62" height="44" viewBox="0 0 62 44">
        <rect x="0" y="3" width="62" height="34" rx="6" fill="#e6e6e6" />
        <text x="6" y="29.500" fontFamily="Noto Sans CJK SC" fontWeight="500" fontSize="25" fill="#000">字幕</text>
        <path d="M14 0L53 42" stroke="#000" strokeWidth="5" />
        <path d="M9.500 2.500L48 42" stroke="#e6e6e6" strokeWidth="4.400" strokeLinecap="round" />
      </svg>
    </Slot>
    <Slot $w={42} $ml={57} $dy={-4}>
      <svg width="42" height="38" viewBox="0 0 42 38">
        <path d="M0 13q1-3 4-3h4L18 2q2-1.500 2 1v32q0 2.500-2 1L8 28H4q-3 0-4-3q-1.300-6 0-12z" fill="#e6e6e6" />
        <path d="M26 11q8 8 0 16z" fill="#e6e6e6" stroke="#e6e6e6" strokeWidth="2" strokeLinejoin="round" />
        <path d="M28 2.500q10 4 11 16.500-1 12.500-11 16.500" fill="none" stroke="#e6e6e6" strokeWidth="4" strokeLinecap="round" />
      </svg>
    </Slot>
    <Slot $w={46} $ml={63} $dy={-4}>
      <svg width="46" height="44" viewBox="0 0 46 44">
        <path
          fillRule="evenodd"
          d="M11 1q2-1.500 4 0l3 2.500h10L31 1q2-1.500 4 0 3 1 3 4l0 4.500 3 5 3 1.500q2 .5 2 3v6q0 2.500-2 3l-3 1.500-3 5V39q0 3-3 4-2 1.500-4 0l-3-2.500H18L15 43q-2 1.500-4 0-3-1-3-4v-4.500l-3-5L2 28q-2-.5-2-3v-6q0-2.500 2-3l3-1.500 3-5V5q0-3 3-4zM23 12a10 10 0 1 0 .01 0z"
          fill="#e6e6e6"
        />
        <circle cx="23" cy="22" r="4.800" fill="#e6e6e6" />
      </svg>
    </Slot>
    <Slot $w={48} $ml={62} $dy={-3}>
      <svg width="48" height="42" viewBox="0 0 48 42">
        <path d="M23 35H7q-5 0-5-5V7q0-5 5-5h29q5 0 5 5v13" fill="none" stroke="#e6e6e6" strokeWidth="4.400" />
        <rect x="28" y="26" width="20" height="15" rx="3" fill="#e6e6e6" />
      </svg>
    </Slot>
    <Slot $w={46} $ml={60} $dy={-3}>
      <svg width="46" height="44" viewBox="0 0 46 44" fill="#e6e6e6">
        <path d="M13 .5L20 14q-3 3-3.500 6.500H1Q0 19 1 16 4 6 11.500 .5zM33 .5L26 14q3 3 3.500 6.500H45q1-1.500 0-4.500Q42 6 34.500 .5z" />
        <circle cx="23" cy="20" r="2.800" />
        <path d="M19 27h8l7.500 13.500q-11 5.500-23 0z" />
      </svg>
    </Slot>
  </Controls>
);

export default function App() {
  return (
    <Player>
      <GlobalStyle />
      <Video>
        <TitleRow />
        <MenuRow />
        <Tabs />
        <Workspace>
          <SideBar />
          <Gutter $w={194}><Grip /></Gutter>
          <DocumentPage />
          <Spacer />
          <Scrollbar><ScrollUp /><ScrollThumb /></Scrollbar>
        </Workspace>
        <Status />
        <Desktop />
      </Video>
      <TopShade />
      <BottomShade />
      <Uploader>江科大自化协</Uploader>
      <Subtitle>上面看一下</Subtitle>
      <LogoBadge>
        <svg width="111" height="106" viewBox="0 0 111 106">
          <path d="M34 6l10 17M77 6L67 23" stroke="#eee" strokeWidth="10" strokeLinecap="round" />
          <path
            fillRule="evenodd"
            d="M18 17Q55 13 93 17q14 3 16 19 2 25 0 49-2 15-16 17-37 4-75 0Q4 100 2 85-.5 61 2 36 4 20 18 17zM46 41q-7-3-8 5-1 15 0 29 1 8 8 5 15-8 28-16 4-4 0-8-13-9-28-15z"
            fill="#eee"
          />
        </svg>
      </LogoBadge>
      <Heatmap width="2880" height="64" viewBox="0 0 2880 64">
        <path d={heatPath()} fill="rgba(0,174,236,.2)" />
        <path d="M2814 51q20 2 42 2v11h-42z" fill="rgba(255,255,255,.2)" />
      </Heatmap>
      <ProgressTrack><ProgressFill /></ProgressTrack>
      <ThumbIcon width="26" height="34" viewBox="0 0 26 34" fill="#fff">
        <path d="M8 1h2v32H8zM14 3l11 12-11 8zM0 13l4-2 4 6-2 4 5 5-2 2-5-4-3 3-1-3 3-5z" />
      </ThumbIcon>
      <PlayerControls />
      <PlayerHeader>
        <VideoTitle>[10-2] MPU6050简介</VideoTitle>
        <HelpBadge>
          <svg width="42" height="41" viewBox="0 -2 42 41">
            <path d="M5 0h32q5 0 5 5v23q0 5-5 5H8l-8 7V5q0-5 5-5z" fill="#ccc" />
            <text x="21" y="28" fontFamily="Noto Sans" fontWeight="800" fontSize="31" textAnchor="middle" fill="#000">?</text>
          </svg>
        </HelpBadge>
      </PlayerHeader>
    </Player>
  );
}
